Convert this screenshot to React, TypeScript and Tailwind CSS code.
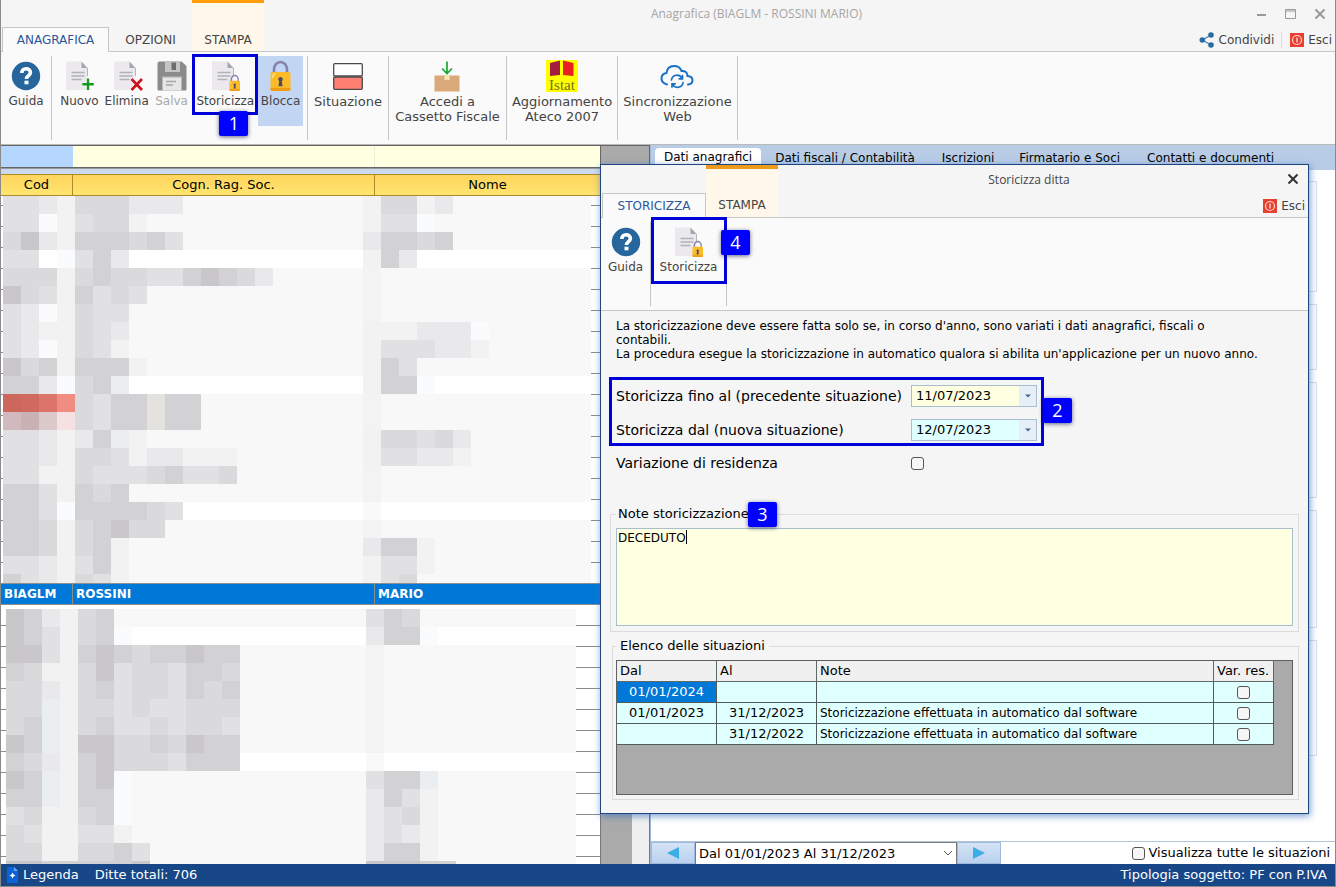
import type { ReactNode } from "react";

const SHADES: Record<string, string> = {
  a: "#cac7ca", b: "#d2d1d3", c: "#dad9db", d: "#e1e0e2", e: "#e9e8ea", f: "#f2f2f3",
  g: "#fafbfc", h: "#e3e2df", i: "#ebeef0", w: "#ffffff",
  R: "#cd675e", S: "#d06a60", T: "#dc7469", U: "#f08c81",
  P: "#d0babd", Q: "#c9b1b4", V: "#dcc9cc", X: "#f6e1e2",
};

type Mosaic = { left: string; right?: string; white?: boolean };

const UPPER: Mosaic[] = [
  { left: "ddefccceee", right: "fccfe" },
  { left: "ddgfdccf", right: "fddg" },
  { left: "caefbbbcbd", right: "ebbcb" },
  { left: "ddwgdbe", right: "fbe", white: true },
  { left: "cccfcbccddbabce" },
  { left: "acdfbdcd" },
  { left: "degfcdd" },
  { left: "deffcde", right: "fffeeeg" },
  { left: "degfcdf", right: "fdddeef" },
  { left: "acbfbbbf", right: "fbd" },
  { left: "bbegcbi", right: "fbbg", white: true },
  { left: "RSTUcdbbhbb" },
  { left: "PQVXcdbbhbb" },
  { left: "ddefebif", right: "fccdce" },
  { left: "ddefccdfeefff", right: "fddeef" },
  { left: "ddffcdddcbddc" },
  { left: "bbdfbcb" },
  { left: "bbdgbbbbcd", white: true },
  { left: "bbcfcbacc" },
  { left: "bbcfcbf", right: "ebbf" },
  { left: "ddefdbf", right: "fddf" },
  { left: "bdefcdf", right: "fdc" },
];

const LOWER: Mosaic[] = [
  { left: "abefcb", right: "dbc" },
  { left: "abdfcbg", right: "ebbg", white: true },
  { left: "aadfbabcbbabb" },
  { left: "bcffcadccdbbc" },
  { left: "ccefcbdccdbcb" },
  { left: "ccifccdcddccc" },
  { left: "cbifcbddcdccd" },
  { left: "abifaaccbcabb" },
  { left: "bcefbacccdbbb", white: true },
  { left: "abifbag", right: "dbbi" },
  { left: "bbifbbg", right: "ebdf" },
  { left: "dcffcbg", right: "edcf" },
  { left: "cdffddf", right: "edef" },
  { left: "ccffccbd", right: "ebbf" },
  { left: "aabbbbba", right: "aaabb" },
];

function Redacted({ rows, x, y, end, top, height, firstLine }: {
  rows: Mosaic[]; x: number; y: number; end: number; top: number; height: number; firstLine: number;
}) {
  const lines = Array.from({ length: Math.ceil((top + height - firstLine) / 21) }, (_, i) => firstLine + i * 21);
  return (
    <svg
      className="block w-full"
      height={height}
      viewBox={`1 ${top} 599 ${height}`}
      preserveAspectRatio="xMinYMin slice"
      shapeRendering="crispEdges"
      aria-hidden="true"
    >
      <rect x={1} y={top} width={599} height={height} fill="#fff" />
      {lines.map((l) => <rect key={l} x={1} y={l} width={599} height={1} fill="#8b8b90" />)}
      {rows.map((row, r) => {
        const cy = y + r * 18;
        return (
          <g key={r}>
            <rect x={x} y={cy} width={end - x} height={18} fill={row.white ? "#fff" : "#f8f8f8"} />
            <rect x={x + 54} y={cy} width={18} height={18} fill="#f4f4f4" />
            <rect x={x + 360} y={cy} width={18} height={18} fill={row.white ? "#f9f9f9" : "#f3f3f3"} />
            {[...row.left].map((s, c) => (
              <rect key={c} x={x + c * 18} y={cy} width={18} height={18} fill={SHADES[s]} />
            ))}
            {[...(row.right ?? "")].map((s, c) => (
              <rect key={c} x={x + (20 + c) * 18} y={cy} width={18} height={18} fill={SHADES[s]} />
            ))}
          </g>
        );
      })}
    </svg>
  );
}

const HelpIcon = () => (
  <svg width="32" height="32" viewBox="0 0 32 32">
    <circle cx="16" cy="16" r="14.2" fill="#27659d" />
    <path d="M11.8 12.9c0-2.6 1.8-4.1 4.3-4.1 2.6 0 4.3 1.5 4.3 3.7 0 3-3.9 3.2-3.9 6.400" fill="none" stroke="#fff" strokeWidth="3.6" />
    <rect x="14.5" y="20.700" width="4" height="3.6" fill="#fff" />
  </svg>
);

const Page = () => (
  <>
    <path d="M3 1.500h15.500l6 6V30H3z" fill="#ebe9ee" />
    <path d="M18.500 1.500l6 6.500h-6z" fill="#a7a6aa" />
    <path d="M24.500 8v8" stroke="#b5b4b8" strokeWidth="1" />
    <path d="M8.500 12.500h13M8.500 16h13M8.500 19.500h10" stroke="#b3b2b7" strokeWidth="1.3" />
  </>
);

const NewIcon = () => (
  <svg width="32" height="32" viewBox="0 0 32 32">
    <Page />
    <path d="M25 18.5v11.500M19.300 24.200h11.400" stroke="#fff" strokeWidth="4" />
    <path d="M25 18.500v11.500M19.300 24.200h11.400" stroke="#139a1c" strokeWidth="2.4" />
  </svg>
);

const DeleteIcon = () => (
  <svg width="32" height="32" viewBox="0 0 32 32">
    <Page />
    <path d="M20.500 19l10.500 11M31 19l-10.500 11" stroke="#fff" strokeWidth="4.600" />
    <path d="M20.500 19l10.500 11M31 19l-10.500 11" stroke="#cc1420" strokeWidth="2.800" />
  </svg>
);

const Lock = () => (
  <>
    <path d="M9 14V9.500a6.500 7.500 0 0 1 13 0V14" fill="none" stroke="#8682ad" strokeWidth="2.600" />
    <rect x="5.500" y="12" width="20" height="19" rx="2" fill="#fbbb27" />
    <path d="M5.500 28h20v1a2 2 0 0 1-2 2h-16a2 2 0 0 1-2-2z" fill="#f09d15" />
    <path d="M7.500 18c0-3 .8-4 3-4" fill="none" stroke="#fde08a" strokeWidth="1.400" />
    <path d="M15.500 17a2.300 2.300 0 0 1 1.300 4.200l.8 5h-4.200l.8-5a2.300 2.300 0 0 1 1.300-4.200z" fill="#4e4a63" />
  </>
);

const LockIcon = () => <svg width="32" height="32" viewBox="0 0 32 32"><Lock /></svg>;

const PageLockIcon = () => (
  <svg width="32" height="32" viewBox="0 0 32 32">
    <Page />
    <g transform="translate(17.500 14.500) scale(.53)"><Lock /></g>
  </svg>
);

const SaveIcon = () => (
  <svg width="32" height="32" viewBox="0 0 32 32">
    <path d="M3.500 1.500h22l5 4.500v23a1.500 1.500 0 0 1-1.500 1.500H3A1.500 1.500 0 0 1 1.500 29V3.500a2 2 0 0 1 2-2z" fill="#8b8b8b" />
    <rect x="9" y="1.500" width="15" height="10.500" fill="#c4c4c4" />
    <rect x="15.500" y="2.500" width="4.500" height="7.500" fill="#6d6d6d" />
    <rect x="6.500" y="16" width="19" height="14.500" fill="#e6e6e6" />
    <path d="M6.500 16.800h19M10 21.500h10M10 25h7" stroke="#a5a5a5" strokeWidth="1.500" />
  </svg>
);

const SituationIcon = () => (
  <svg width="32" height="32" viewBox="0 0 32 32">
    <rect x="1.700" y="3.700" width="28.600" height="12.300" rx="1" fill="#fff" stroke="#4b4b4b" strokeWidth="1.300" />
    <rect x="1.700" y="17" width="28.600" height="12.300" rx="1" fill="#ff8073" stroke="#4b4b4b" strokeWidth="1.300" />
  </svg>
);

const BoxIcon = () => (
  <svg width="32" height="32" viewBox="0 0 32 32">
    <path d="M3.500 15.500h25v16h-25z" fill="#d9a979" />
    <path d="M13.500 15.500h5v5l-2.500-1-2.500 1z" fill="#fae9b6" />
    <path d="M16 1.500v12M11 8.500l5 5 5-5" fill="none" stroke="#16a82e" strokeWidth="1.700" />
  </svg>
);

const IstatIcon = () => (
  <svg className="overflow-visible" width="32" height="32" viewBox="0 0 32 32">
    <rect width="32" height="32" fill="#ffff00" />
    <path d="M4 3l10-2.500v14.500L4 16z" fill="#a31f3d" />
    <path d="M17 .5L27.500 3v13L17 15z" fill="#e8201f" />
    <text x="16" y="30" textAnchor="middle" fontFamily="Liberation Serif, serif" fontSize="15" fill="#77701a">Istat</text>
  </svg>
);

const CloudIcon = () => (
  <svg width="34" height="32" viewBox="0 0 34 32" fill="none" stroke="#1670c6" strokeWidth="2" strokeLinecap="round">
    <path d="M7 24.500C3.500 23.500 1.500 21.500 1.500 18.500c0-3 2-5 5-5.500C7 8.500 10 6 14 6c3.500 0 6.500 2 7.500 5 3.500-.5 6 1.500 6 5 3 .3 5 2 5 4.200 0 2.500-2 4-4.500 4.300" />
    <path d="M11.500 20a5.500 5.500 0 0 1 10.500-1.500M23 22.500a5.500 5.500 0 0 1-10.500 1.500M22.500 15.500v3.300h-3.300M12 27v-3.200h3.200" strokeWidth="1.700" />
  </svg>
);

const ShareIcon = () => (
  <svg width="16" height="16" viewBox="0 0 16 16">
    <path d="M12 3L3.500 8l8.500 5" fill="none" stroke="#4d87b4" strokeWidth="1.300" />
    <circle cx="12" cy="3" r="2.800" fill="#2c6b9f" />
    <circle cx="3.300" cy="8" r="2.800" fill="#2c6b9f" />
    <circle cx="12" cy="13" r="2.800" fill="#2c6b9f" />
  </svg>
);

const ExitIcon = () => (
  <svg width="14" height="14" viewBox="0 0 14 14">
    <rect width="14" height="14" fill="#e8402f" />
    <circle cx="7" cy="7" r="4.500" fill="none" stroke="#ffd6d0" strokeWidth="1.200" />
    <path d="M7 4.500v5" stroke="#ffd6d0" strokeWidth="1.400" />
  </svg>
);

const CloseIcon = () => (
  <svg width="12" height="12" viewBox="0 0 12 12">
    <path d="M1.500 1.500l9 9M10.500 1.500l-9 9" stroke="currentColor" strokeWidth="2" />
  </svg>
);

function RibbonButton({ icon, label, className = "", children }: {
  icon: ReactNode; label: ReactNode; className?: string; children?: ReactNode;
}) {
  return (
    <button type="button" className={`relative flex h-[70px] flex-col items-center gap-0.5 pt-1 text-center leading-[15px] whitespace-nowrap ${className}`}>
      {icon}
      <span>{label}</span>
      {children}
    </button>
  );
}

function Callout({ n, className }: { n: string; className: string }) {
  return (
    <span className={`absolute z-20 flex h-[25px] w-[29px] items-center justify-center rounded-[2px] bg-[#0000ff] pb-0.5 font-['Open_Sans',sans-serif] text-lg text-white shadow-[0_1px_4px_rgba(0,0,60,0.6)] ${className}`}>
      {n}
    </span>
  );
}

const check = "size-[13px] shrink-0 appearance-none rounded-[3px] border border-[#555] bg-[#f6f6f6] checked:bg-[#0078d7]";

function DateField({ id, value, tint }: { id: string; value: string; tint: string }) {
  return (
    <div className={`flex h-[22px] w-[126px] border border-[#a9bfd0] ${tint}`}>
      <input id={id} defaultValue={value} className="w-[107px] bg-transparent pl-1 text-[13px] outline-none" />
      <button type="button" aria-label="Apri calendario" className="flex flex-1 items-center justify-center bg-[#e6eef8]">
        <svg width="6" height="4" viewBox="0 0 6 4"><path d="M0 .5h6L3 3.500z" fill="#46688f" /></svg>
      </button>
    </div>
  );
}

const SITUATIONS = [
  { from: "01/01/2024", to: "", note: "" },
  { from: "01/01/2023", to: "31/12/2023", note: "Storicizzazione effettuata in automatico dal software" },
  { from: "", to: "31/12/2022", note: "Storicizzazione effettuata in automatico dal software" },
];

function HistoryDialog() {
  return (
    <div role="dialog" aria-label="Storicizza ditta" className="absolute top-[164px] left-[599px] z-10 w-[709px] border border-[#1f4580] bg-[#f5f5f5] shadow-[1px_2px_7px_rgba(60,110,190,0.7)]">
      <header className="flex h-[53px] border-b border-[#c6c6c6]">
        <button type="button" className="mt-7 -mb-px ml-px h-[25px] w-[104px] border border-b-0 border-[#c6c6c6] bg-[#fafafa] text-[#2b579a]">STORICIZZA</button>
        <button type="button" className="w-[72px] border-t-4 border-[#ed9a1c] bg-[#fef7ea] pt-6">STAMPA</button>
        <h2 className="flex-1 pt-[7px] pl-[142px] text-center font-['Open_Sans',sans-serif] text-[12px]">Storicizza ditta</h2>
        <div className="flex w-[170px] flex-col items-end justify-between pt-2 pr-[3px] pb-[3px]">
          <button type="button" aria-label="Chiudi" className="mr-1.5 text-[#333]"><CloseIcon /></button>
          <button type="button" className="flex items-center gap-1"><ExitIcon />Esci</button>
        </div>
      </header>
      <div className="flex h-[93px] border-b border-[#c6c6c6] bg-[#fafafa] pt-1 pb-1">
        <div className="flex w-[50px] justify-center border-r border-[#c6c6c6]">
          <RibbonButton icon={<HelpIcon />} label="Guida" />
        </div>
        <div className="relative flex w-[76px] justify-center border-r border-[#c6c6c6]">
          <RibbonButton icon={<PageLockIcon />} label="Storicizza" />
          <span className="absolute -top-[5px] left-0 h-[67px] w-[76px] border-[3px] border-[#0000d8]" />
          <Callout n="4" className="top-2 left-[70px]" />
        </div>
      </div>
      <form className="px-[9px] pt-2 pb-[13px] text-black">
        <p className="px-[6px] leading-[14px]">
          La storicizzazione deve essere fatta solo se, in corso d'anno, sono variati i dati anagrafici, fiscali o<br />
          contabili.<br />
          La procedura esegue la storicizzazione in automatico qualora si abilita un'applicazione per un nuovo anno.
        </p>
        <div className="relative mt-6 grid grid-cols-[295px_126px] items-center gap-y-3 pl-[6px]">
          <label htmlFor="until" className="text-sm leading-5">Storicizza fino al (precedente situazione)</label>
          <DateField id="until" value="11/07/2023" tint="bg-[#ffffe1]" />
          <label htmlFor="since" className="text-sm leading-5">Storicizza dal (nuova situazione)</label>
          <DateField id="since" value="12/07/2023" tint="bg-[#e0ffff]" />
          <label htmlFor="residence" className="text-sm leading-5">Variazione di residenza</label>
          <input id="residence" type="checkbox" className={check} />
          <span className="pointer-events-none absolute -top-2 -left-px h-[69px] w-[435px] border-[3px] border-[#0000d8]" />
          <Callout n="2" className="top-[13px] left-[433px]" />
        </div>
        <fieldset className="relative mt-[33px] border border-[#dcdcdc] px-[5px] pt-1.5 pb-[5px]">
          <legend className="px-0.5 text-[13px] leading-4"><label htmlFor="notes">Note storicizzazione</label></legend>
          <Callout n="3" className="-top-[20px] left-[137px]" />
          <textarea id="notes" defaultValue="DECEDUTO" className="block h-[98px] w-full resize-none border border-[#a9c0cc] bg-[#ffffe1] px-px leading-[18px] outline-none" />
          <span className="pointer-events-none absolute top-2 left-[75px] h-[14px] w-px bg-black" />
        </fieldset>
        <fieldset className="mt-1.5 ml-0.5 border border-[#dcdcdc] pt-1.5 pr-[5px] pb-1 pl-[3px]">
          <legend className="px-1 text-[13px] leading-4">Elenco delle situazioni</legend>
          <div className="h-[135px] border border-[#5e625e] bg-[#aaaaaa] pr-[18px]">
            <table className="w-full table-fixed border-separate border-spacing-0 text-left">
              <colgroup><col className="w-[100px]" /><col className="w-[100px]" /><col /><col className="w-[60px]" /></colgroup>
              <thead>
                <tr className="h-[21px] bg-[#f0f0f0]">
                  {["Dal", "Al", "Note", "Var. res."].map((h) => (
                    <th key={h} className="border-r border-b border-[#5e6a66] px-[3px] py-0 text-[13px] font-normal whitespace-nowrap">{h}</th>
                  ))}
                </tr>
              </thead>
              <tbody>
                {SITUATIONS.map((s, i) => (
                  <tr key={i} className="h-[21px] bg-[#e0ffff]">
                    <td className={`border-r border-b border-[#4f5c5a] p-0 text-center text-[13px] ${i === 0 ? "bg-[#0078d7] text-white" : ""}`}>{s.from}</td>
                    <td className="border-r border-b border-[#4f5c5a] p-0 text-center text-[13px]">{s.to}</td>
                    <td className="border-r border-b border-[#4f5c5a] px-[3px] py-0 whitespace-nowrap">{s.note}</td>
                    <td className="border-r border-b border-[#4f5c5a] p-0 text-center">
                      <input type="checkbox" aria-label="Variazione residenza" className={`${check} mx-auto block`} />
                    </td>
                  </tr>
                ))}
              </tbody>
            </table>
          </div>
        </fieldset>
      </form>
    </div>
  );
}

function Ribbon() {
  const group = "flex justify-center border-r border-[#c6c6c6]";
  return (
    <div className="flex h-[93px] border-b border-[#b9b9b9] bg-[#fafafa] pt-1 pb-1">
      <div className={`${group} w-[51px]`}><RibbonButton icon={<HelpIcon />} label="Guida" /></div>
      <div className={`${group} w-[256px] px-1`}>
        <RibbonButton className="w-[47px]" icon={<NewIcon />} label="Nuovo" />
        <RibbonButton className="w-[48px]" icon={<DeleteIcon />} label="Elimina" />
        <RibbonButton className="w-[42px] text-[#a8a8a8]" icon={<SaveIcon />} label="Salva" />
        <RibbonButton className="w-[66px]" icon={<PageLockIcon />} label="Storicizza">
          <span className="absolute -top-0.5 left-0 h-[61px] w-[66px] border-[3px] border-[#0000d8]" />
          <Callout n="1" className="top-[55px] left-[27px]" />
        </RibbonButton>
        <RibbonButton className="w-[45px] bg-[#c2d5f2]" icon={<LockIcon />} label="Blocca" />
      </div>
      <div className={`${group} w-[81px] text-[13px]`}><RibbonButton icon={<SituationIcon />} label="Situazione" /></div>
      <div className={`${group} w-[118px] text-[13px]`}><RibbonButton icon={<BoxIcon />} label={<>Accedi a<br />Cassetto Fiscale</>} /></div>
      <div className={`${group} w-[111px] text-[13px]`}><RibbonButton icon={<IstatIcon />} label={<>Aggiornamento<br />Ateco 2007</>} /></div>
      <div className={`${group} w-[120px] text-[13px]`}><RibbonButton icon={<CloudIcon />} label={<>Sincronizzazione<br />Web</>} /></div>
    </div>
  );
}

function CompanyList() {
  const th = "border-t border-b border-[#b08a2a] p-0 font-normal";
  const td = "border-y border-[#8d8f8a] py-0 pr-0 pl-[3px]";
  return (
    <section className="flex w-[649px] shrink-0 flex-col text-black">
      <div className="flex h-[23px] border-y border-[#666]">
        <input aria-label="Filtro codice" className="w-[72px] bg-[#b5d6ff] outline-none" />
        <input aria-label="Filtro cognome" className="w-[302px] border-r border-[#eeeed8] bg-[#ffffe1] outline-none" />
        <input aria-label="Filtro nome" className="w-[225px] bg-[#ffffe1] outline-none" />
        <div className="flex-1 border-x border-[#666] bg-[#aaaaaa]" />
      </div>
      <div className="h-[6px] border-t border-[#999] bg-[#cbdaee]" />
      <div className="flex flex-1">
        <table className="w-[599px] table-fixed border-separate border-spacing-0 text-left">
          <colgroup><col className="w-[72px]" /><col className="w-[302px]" /><col /></colgroup>
          <thead>
            <tr className="h-[22px] bg-linear-to-b from-[#ffd45c] to-[#ffe570] text-center text-[13px]">
              <th className={`${th} border-r`}>Cod</th>
              <th className={`${th} border-r`}>Cogn. Rag. Soc.</th>
              <th className={th}>Nome</th>
            </tr>
          </thead>
          <tbody>
            <tr>
              <td colSpan={3} className="p-0">
                <Redacted rows={UPPER} x={3} y={196} end={591} top={196} height={387} firstLine={205} />
              </td>
            </tr>
            <tr className="h-[22px] bg-[#0078d7] font-bold text-white">
              <td className={`${td} border-r`}>BIAGLM</td>
              <td className={`${td} border-r`}>ROSSINI</td>
              <td className={td}>MARIO</td>
            </tr>
            <tr>
              <td colSpan={3} className="p-0">
                <Redacted rows={LOWER} x={6} y={609} end={576} top={605} height={259} firstLine={625} />
              </td>
            </tr>
          </tbody>
        </table>
        <div className="w-8 border-l border-[#777] bg-[#aaaaaa]" />
        <div className="flex-1 border-r border-[#777] bg-[#f0f0f0]" />
      </div>
    </section>
  );
}

function DetailPanel() {
  const nav = "flex w-[44px] items-center justify-center border border-[#9db9de] bg-linear-to-b from-[#d5e3f5] to-[#b9d1ef]";
  return (
    <section className="flex min-w-0 flex-1 flex-col border-l border-[#a5bbd8] bg-white text-black">
      <nav className="flex h-[25px] items-center bg-[#b8cce6] pt-[3px] whitespace-nowrap">
        <a href="#dati" className="ml-1 h-[22px] rounded-t bg-white px-[9px] leading-[19px]">Dati anagrafici</a>
        <a href="#fiscali" className="ml-[14px] pb-0.5">Dati fiscali / Contabilità</a>
        <a href="#iscrizioni" className="ml-[27px] pb-0.5">Iscrizioni</a>
        <a href="#firmatario" className="ml-[25px] pb-0.5">Firmatario e Soci</a>
        <a href="#contatti" className="ml-[27px] pb-0.5">Contatti e documenti</a>
      </nav>
      <div className="flex flex-1 flex-col gap-3 pt-[11px] pr-[18px] pl-2">
        <div className="h-[111px] border border-[#d5dfec]" />
        <div className="h-[66px] border border-[#d5dfec]" />
        <div className="h-[116px] border border-[#d5dfec]" />
        <div className="h-[118px] border border-[#d5dfec]" />
        <div className="h-[116px] border border-[#d5dfec]" />
      </div>
      <div className="flex h-[23px] items-stretch border-t border-[#b4c6dc]">
        <button type="button" aria-label="Precedente" className={nav}>
          <svg width="12" height="12" viewBox="0 0 12 12"><path d="M12 0v12L0 6z" fill="#3caee4" /></svg>
        </button>
        <div className="relative w-[262px]">
          <select aria-label="Periodo" className="h-full w-full appearance-none border border-b-0 border-[#7a7a7a] bg-white pl-[3px] text-[13px] leading-4 outline-none">
            <option>Dal 01/01/2023 Al 31/12/2023</option>
          </select>
          <svg className="pointer-events-none absolute top-2 right-1" width="10" height="7" viewBox="0 0 10 7"><path d="M1 1l4 4 4-4" fill="none" stroke="#555" /></svg>
        </div>
        <button type="button" aria-label="Successivo" className={nav}>
          <svg width="12" height="12" viewBox="0 0 12 12"><path d="M0 0v12l12-6z" fill="#3caee4" /></svg>
        </button>
        <label className="ml-auto flex items-center gap-1 pr-[5px] text-[13px]">
          <input type="checkbox" className={check} />
          Visualizza tutte le situazioni
        </label>
      </div>
    </section>
  );
}

export default function App() {
  return (
    <div className="relative flex min-h-screen flex-col border-x border-[#8a8a8a] bg-[#f5f5f5] font-['DejaVu_Sans',sans-serif] text-[12px] leading-4 text-[#444]">
      <header className="flex h-[52px] border-b border-[#c6c6c6]">
        <button type="button" className="mt-[27px] -mb-px ml-px h-[25px] w-[107px] border border-b-0 border-[#c6c6c6] bg-[#fafafa] text-[#2b579a]">ANAGRAFICA</button>
        <button type="button" className="w-[83px] pt-7">OPZIONI</button>
        <button type="button" className="w-[72px] border-t-[3px] border-[#ff9d0a] bg-[#fef7ea] pt-[25px]">STAMPA</button>
        <h1 className="flex-1 pt-1.5 pl-[54px] text-center font-['Open_Sans',sans-serif] text-[12px] text-[#a5a5a5]">Anagrafica (BIAGLM - ROSSINI MARIO)</h1>
        <div className="flex w-[140px] flex-col items-end justify-between pt-1.5 pb-[3px]">
          <div className="flex items-center gap-[18px] pr-[9px] text-[#999]">
            <button type="button" aria-label="Riduci" className="mt-1"><svg width="10" height="12" viewBox="0 0 10 12"><path d="M0 5h9" stroke="currentColor" strokeWidth="2" /></svg></button>
            <button type="button" aria-label="Ingrandisci"><svg width="11" height="11" viewBox="0 0 11 11"><path d="M.5 .5h10v9H.5zM.5 2h10" fill="none" stroke="currentColor" /></svg></button>
            <button type="button" aria-label="Chiudi"><CloseIcon /></button>
          </div>
          <div className="flex items-center pr-[3px]">
            <button type="button" className="flex items-center gap-1 border-r border-[#ddd] pr-[7px]"><ShareIcon />Condividi</button>
            <button type="button" className="ml-2 flex items-center gap-1"><ExitIcon />Esci</button>
          </div>
        </div>
      </header>
      <Ribbon />
      <main className="flex flex-1">
        <CompanyList />
        <DetailPanel />
      </main>
      <footer className="flex h-[23px] items-center border-b border-[#8a8a8a] bg-[#184788] pr-2 pl-[5px] text-[13px] text-white">
        <a href="#legenda" className="flex items-center gap-1">
          <svg width="13" height="16" viewBox="0 0 13 16">
            <path d="M1 0h7l4 4v12H1z" fill="#0a63d8" />
            <path d="M8 0l4 4H8z" fill="#63a8f0" />
            <path d="M6.500 5.500l1 2 2 1-2 1-1 2-1-2-2-1 2-1z" fill="#fff" />
          </svg>
          Legenda
        </a>
        <span className="ml-4">Ditte totali: 706</span>
        <span className="ml-auto">Tipologia soggetto: PF con P.IVA</span>
      </footer>
      <HistoryDialog />
    </div>
  );
}
